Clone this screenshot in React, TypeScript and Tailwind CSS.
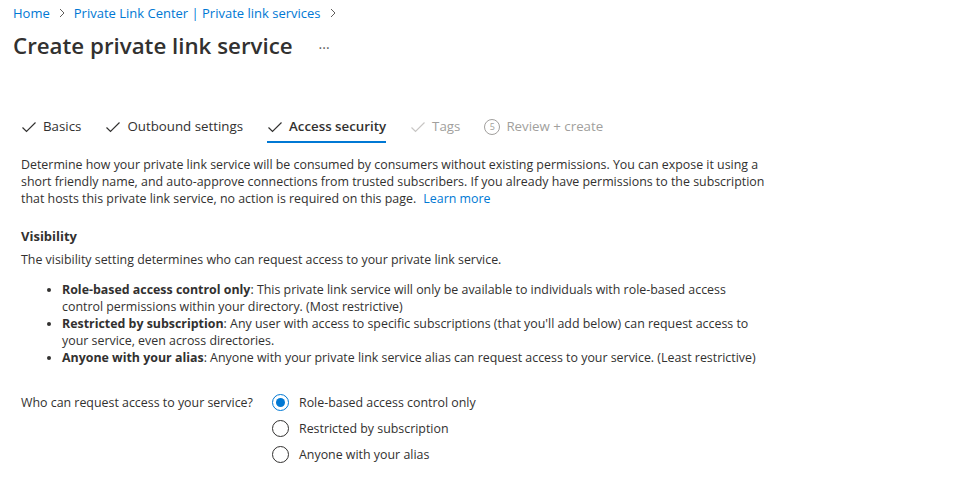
import React from 'react'

const font = { fontFamily: '"Open Sans", "Noto Sans", sans-serif' }

function Check({ muted }: { muted?: boolean }) {
  return (
    <svg width="16" height="16" viewBox="0 0 16 16" className="shrink-0">
      <path d="M1.5 8.5 L5.5 12.5 L14.5 3.5" fill="none" stroke={muted ? '#c8c6c4' : '#323130'} strokeWidth="1.2" />
    </svg>
  )
}

function Chevron() {
  return (
    <svg width="8" height="10" viewBox="0 0 8 10" className="shrink-0">
      <path d="M2 1 L6 5 L2 9" fill="none" stroke="#605e5c" strokeWidth="1" />
    </svg>
  )
}

function Tab({ label, active, done = true, muted, step }: { label: string; active?: boolean; done?: boolean; muted?: boolean; step?: number }) {
  return (
    <div className={`relative flex items-center gap-[6px] pb-[6px] pt-[6px] ${active ? 'font-semibold' : ''}`}>
      {done ? (
        <Check muted={muted} />
      ) : (
        <span className="flex h-[16px] w-[16px] items-center justify-center rounded-full border border-[#a19f9d] text-[9px] text-[#a19f9d]">{step}</span>
      )}
      <span className={muted ? 'text-[#a19f9d]' : 'text-[#323130]'}>{label}</span>
      {active && <span className="absolute bottom-[0px] left-0 right-0 h-[2px] bg-[#0078d4]" />}
    </div>
  )
}

function Radio({ label, checked }: { label: string; checked?: boolean }) {
  return (
    <label className="flex h-[26px] items-center gap-[10px]">
      <span className={`flex h-[17px] w-[17px] items-center justify-center rounded-full border ${checked ? 'border-[#0078d4]' : 'border-[#323130]'}`}>
        {checked && <span className="h-[9px] w-[9px] rounded-full bg-[#0078d4]" />}
      </span>
      <span>{label}</span>
    </label>
  )
}

export default function App() {
  return (
    <div className="min-h-screen w-full bg-white text-[12.4px] text-[#323130]" style={font}>
      <div className="px-[13px] pt-[4px]">
        <nav className="flex items-center gap-[8px] text-[13px] leading-[18px] text-[#0078d4]">
          <span>Home</span>
          <Chevron />
          <span>Private Link Center | Private link services</span>
          <Chevron />
        </nav>
        <div className="mt-[8px] flex items-center">
          <h1 className="text-[22.3px] font-semibold leading-[32px] text-[#323130]">Create private link service</h1>
          <span className="ml-[26px] mt-[3px] text-[14px] text-[#605e5c]">···</span>
        </div>
      </div>

      <div className="px-[21px]">
        <div className="mt-[49px] flex gap-[24px] text-[13.3px]">
          <Tab label="Basics" />
          <Tab label="Outbound settings" />
          <Tab label="Access security" active />
          <Tab label="Tags" muted />
          <Tab label="Review + create" done={false} step={5} muted />
        </div>

        <p className="mt-[13px] whitespace-nowrap leading-[17px]">
          Determine how your private link service will be consumed by consumers without existing permissions. You can expose it using a
          <br />
          short friendly name, and auto-approve connections from trusted subscribers. If you already have permissions to the subscription
          <br />
          that hosts this private link service, no action is required on this page.{' '}
          <span className="ml-[4px] text-[#0078d4]">Learn more</span>
        </p>

        <h2 className="mt-[20px] text-[13px] font-bold leading-[18px]">Visibility</h2>
        <p className="mt-[6px] leading-[17px]">The visibility setting determines who can request access to your private link service.</p>

        <ul className="mt-[13px] list-disc whitespace-nowrap pl-[41px] leading-[17px] marker:text-[#323130]">
          <li>
            <span className="font-bold">Role-based access control only</span>: This private link service will only be available to individuals with role-based access
            <br />
            control permissions within your directory. (Most restrictive)
          </li>
          <li>
            <span className="font-bold">Restricted by subscription</span>: Any user with access to specific subscriptions (that you'll add below) can request access to
            <br />
            your service, even across directories.
          </li>
          <li>
            <span className="font-bold">Anyone with your alias</span>: Anyone with your private link service alias can request access to your service. (Least restrictive)
          </li>
        </ul>

        <div className="mt-[24px] flex">
          <div className="w-[251px] pt-[4px]">Who can request access to your service?</div>
          <div className="flex flex-col">
            <Radio label="Role-based access control only" checked />
            <Radio label="Restricted by subscription" />
            <Radio label="Anyone with your alias" />
          </div>
        </div>
      </div>
    </div>
  )
}
